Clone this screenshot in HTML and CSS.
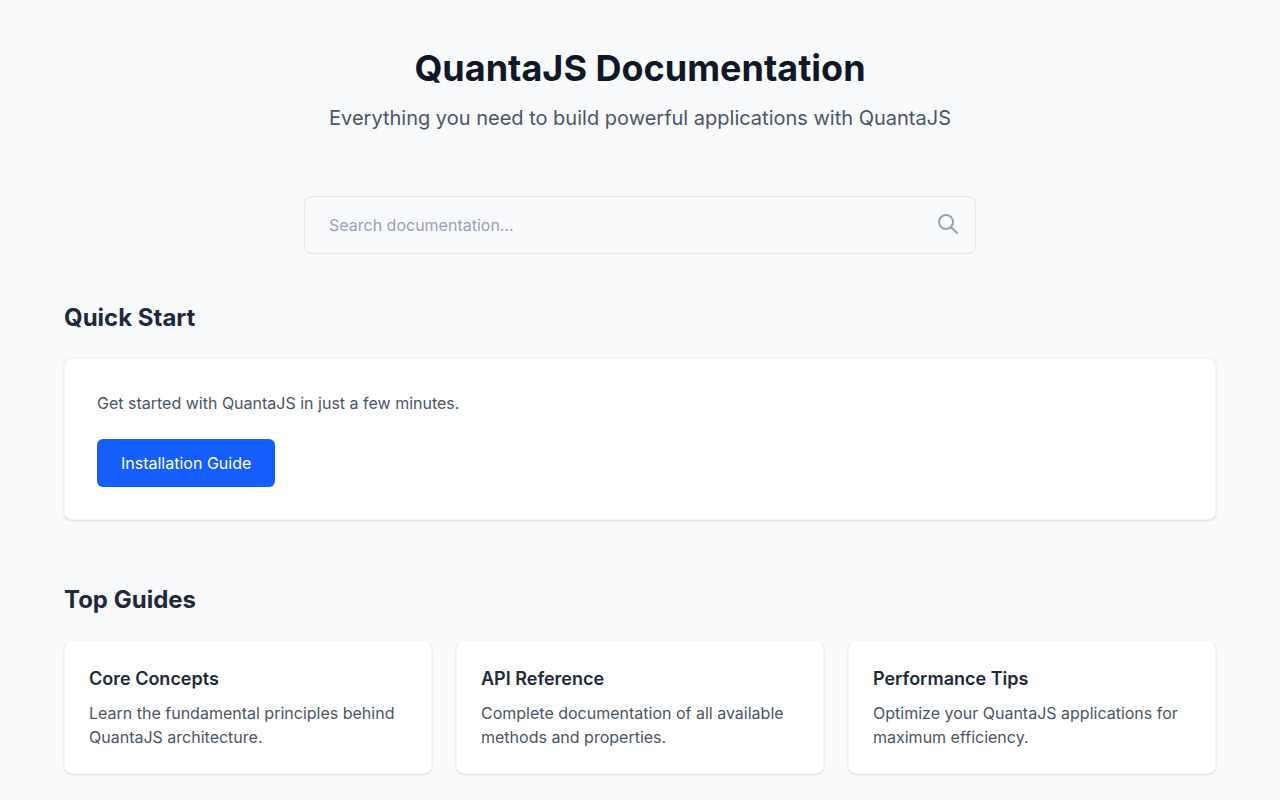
FILE: index.html
```html
<!DOCTYPE html>
<html lang="en">
<head>
<meta charset="utf-8">
<meta name="viewport" content="width=device-width, initial-scale=1">
<title>QuantaJS Documentation</title>
<link rel="stylesheet" href="styles.css">
</head>
<body>
<main class="page">
  <header class="hero">
    <h1 class="hero-title">QuantaJS Documentation</h1>
    <p class="hero-text">Everything you need to build powerful applications with QuantaJS</p>
  </header>
  <form class="search" role="search">
    <input class="search-input" type="text" placeholder="Search documentation..." aria-label="Search documentation">
    <button class="search-button" type="button" aria-label="Search">
      <svg class="search-icon" viewBox="0 0 24 24" fill="none" stroke="currentColor" stroke-width="2" stroke-linecap="round" stroke-linejoin="round" aria-hidden="true"><path d="M21 21l-6-6m2-5a7 7 0 11-14 0 7 7 0 0114 0z"/></svg>
    </button>
  </form>
  <section class="section">
    <h2 class="section-title">Quick Start</h2>
    <div class="card card-large">
      <p class="start-text">Get started with QuantaJS in just a few minutes.</p>
      <a class="button" href="#installation">Installation Guide</a>
    </div>
  </section>
  <section class="section">
    <h2 class="section-title">Top Guides</h2>
    <div class="guides">
      <article class="card">
        <h3 class="card-title">Core Concepts</h3>
        <p class="card-text">Learn the fundamental principles behind QuantaJS architecture.</p>
      </article>
      <article class="card">
        <h3 class="card-title">API Reference</h3>
        <p class="card-text">Complete documentation of all available methods and properties.</p>
      </article>
      <article class="card">
        <h3 class="card-title">Performance Tips</h3>
        <p class="card-text">Optimize your QuantaJS applications for maximum efficiency.</p>
      </article>
    </div>
  </section>
</main>
</body>
</html>
```
FILE: styles.css
```css
*, *::before, *::after { box-sizing: border-box; }
body {
  margin: 0;
  background: #f9fafc;
  color: #4a5565;
  font: 16px/24px Inter, sans-serif;
}
h1, h2, h3, p { margin: 0; }
.page {
  max-width: 1280px;
  margin: 0 auto;
  padding: 48px 64px 0;
}
.hero {
  margin-bottom: 64px;
  text-align: center;
}
.hero-title {
  margin-bottom: 16px;
  color: #101828;
  font-size: 36px;
  line-height: 40px;
  font-weight: 700;
}
.hero-text {
  font-size: 20px;
  line-height: 28px;
}
.search {
  position: relative;
  max-width: 672px;
  margin: 0 auto 48px;
}
.search-input {
  display: block;
  width: 100%;
  padding: 16px 24px;
  border: 1px solid #e5e7eb;
  border-radius: 8px;
  background: transparent;
  color: #101828;
  font: inherit;
}
.search-input::placeholder { color: #99a1af; opacity: 1; }
.search-button {
  position: absolute;
  top: 16px;
  right: 16px;
  padding: 0;
  border: 0;
  background: none;
  color: #99a1af;
}
.search-icon {
  display: block;
  width: 24px;
  height: 24px;
}
.section { margin-bottom: 64px; }
.section-title {
  margin-bottom: 24px;
  color: #1e2939;
  font-size: 24px;
  line-height: 32px;
  font-weight: 700;
}
.card {
  padding: 24px;
  border: 1px solid #f3f4f6;
  border-radius: 8px;
  background: #fff;
  box-shadow: 0 1px 3px rgba(0, 0, 0, 0.1), 0 1px 2px -1px rgba(0, 0, 0, 0.1);
}
.card-large { padding: 32px; }
.start-text { margin-bottom: 24px; }
.button {
  display: inline-block;
  padding: 12px 24px;
  border-radius: 6px;
  background: #155dfc;
  color: #fff;
  text-decoration: none;
}
.guides {
  display: grid;
  grid-template-columns: repeat(3, 1fr);
  gap: 24px;
}
.card-title {
  margin-bottom: 8px;
  color: #1e2939;
  font-size: 18px;
  line-height: 28px;
  font-weight: 600;
}
@media (max-width: 768px) {
  .page { padding: 48px 24px 0; }
  .guides { grid-template-columns: 1fr; }
}
```
